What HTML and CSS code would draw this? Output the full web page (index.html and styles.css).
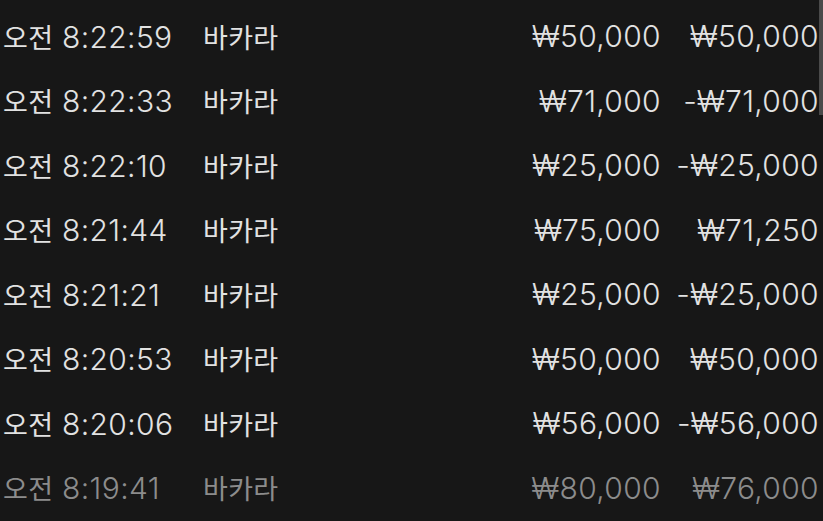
FILE: index.html
```html
<!DOCTYPE html>
<html lang="ko">
<head>
<meta charset="utf-8">
<link rel="stylesheet" href="styles.css">
</head>
<body>
<div class="list">
  <div class="row"><span class="time"><span class="ko">오전</span> 8:22:59</span><span class="game ko">바카라</span><span class="amt">₩50,000</span><span class="res">₩50,000</span></div>
  <div class="row"><span class="time"><span class="ko">오전</span> 8:22:33</span><span class="game ko">바카라</span><span class="amt">₩71,000</span><span class="res">-₩71,000</span></div>
  <div class="row"><span class="time"><span class="ko">오전</span> 8:22:10</span><span class="game ko">바카라</span><span class="amt">₩25,000</span><span class="res">-₩25,000</span></div>
  <div class="row"><span class="time"><span class="ko">오전</span> 8:21:44</span><span class="game ko">바카라</span><span class="amt">₩75,000</span><span class="res">₩71,250</span></div>
  <div class="row"><span class="time"><span class="ko">오전</span> 8:21:21</span><span class="game ko">바카라</span><span class="amt">₩25,000</span><span class="res">-₩25,000</span></div>
  <div class="row"><span class="time"><span class="ko">오전</span> 8:20:53</span><span class="game ko">바카라</span><span class="amt">₩50,000</span><span class="res">₩50,000</span></div>
  <div class="row"><span class="time"><span class="ko">오전</span> 8:20:06</span><span class="game ko">바카라</span><span class="amt">₩56,000</span><span class="res">-₩56,000</span></div>
  <div class="row faded"><span class="time"><span class="ko">오전</span> 8:19:41</span><span class="game ko">바카라</span><span class="amt">₩80,000</span><span class="res">₩76,000</span></div>
</div>
<div class="scrollbar"></div>
</body>
</html>
```

FILE: styles.css
```css
html, body {
  margin: 0;
  padding: 0;
  background: #171717;
  height: 100%;
  overflow: hidden;
}
body {
  font-family: "Inter", "Noto Sans CJK KR", sans-serif;
  color: #e2e2e2;
  font-size: 30px;
  font-weight: 300;
  letter-spacing: 0.35px;
}
.list {
  padding: 4px 4px 0 3px;
}
.row {
  display: grid;
  grid-template-columns: 200px 1fr 200px 158px;
  height: 64.5px;
  align-items: center;
  white-space: nowrap;
}
.ko {
  font-family: "Noto Sans CJK KR", sans-serif;
  font-size: 27px;
  font-weight: 400;
  letter-spacing: 0.3px;
}
.amt, .res {
  text-align: right;
}
.faded {
  color: #8c8c8c;
}
.scrollbar {
  position: absolute;
  top: 0;
  right: 0;
  width: 4px;
  height: 115px;
  background: #4a4a4a;
}
```
